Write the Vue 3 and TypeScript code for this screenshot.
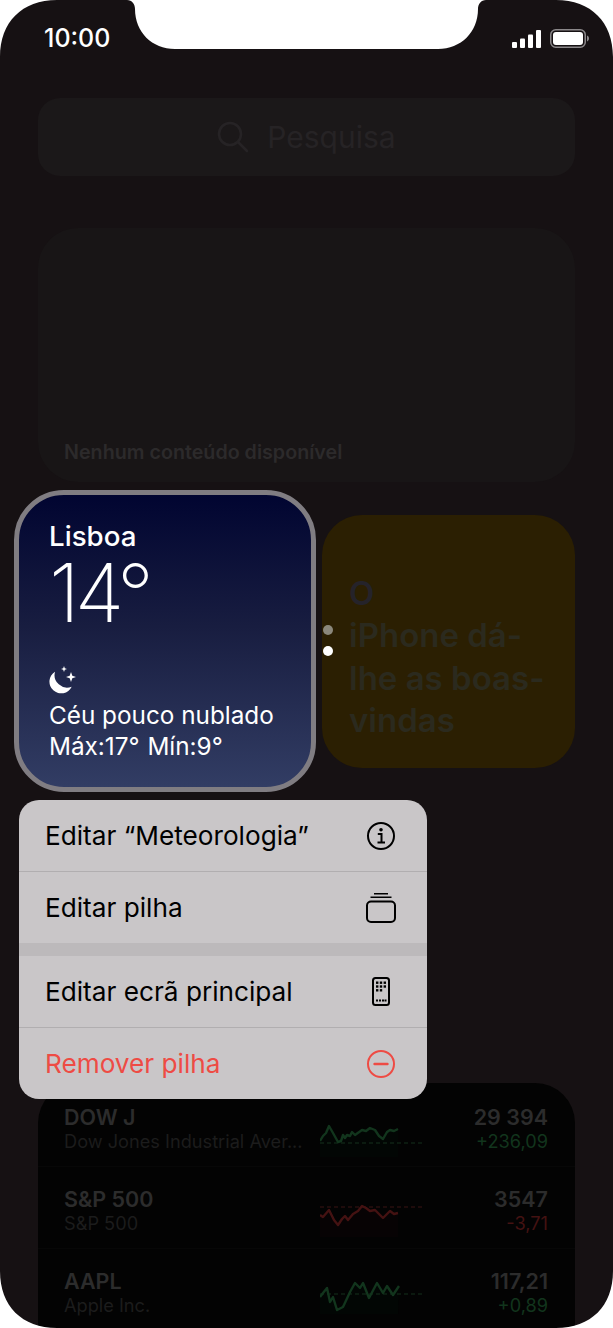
<script setup lang="ts">
interface Stock {
  symbol: string
  name: string
  price: string
  change: string
  up: boolean
  points: string
  baseline: number
  chartTop: number
}

const stocks: Stock[] = [
  {
    symbol: 'DOW J',
    name: 'Dow Jones Industrial Aver...',
    price: '29 394',
    change: '+236,09',
    up: true,
    points: '0,18 3,13 6,10 9,3 13,10 18,19 21,18 23,12 25,15 27,12 30,13 32,9 35,12 42,7 46,8 50,5 55,7 59,13 63,16 67,9 70,7 74,8 78,6',
    baseline: 20,
    chartTop: 18
  },
  {
    symbol: 'S&P 500',
    name: 'S&P 500',
    price: '3547',
    change: '-3,71',
    up: false,
    points: '0,12 3,14 9,7 14,17 18,22 22,16 25,13 28,17 33,11 38,8 42,3 46,5 50,8 55,7 59,11 63,15 70,8 74,11 78,10',
    baseline: 4,
    chartTop: 16
  },
  {
    symbol: 'AAPL',
    name: 'Apple Inc.',
    price: '117,21',
    change: '+0,89',
    up: true,
    points: '0,17 3,13 7,8 10,22 13,17 17,30 23,27 30,12 35,3 40,8 43,3 49,18 57,3 63,13 67,6 73,15 79,6',
    baseline: 14,
    chartTop: 11
  }
]
</script>

<template>
  <div class="phone">
    <header class="status">
      <span class="time">10:00</span>
      <div class="status-icons">
        <svg width="29" height="18" viewBox="0 0 29 18" fill="#fff">
          <rect x="0" y="12" width="5" height="6" rx="1" />
          <rect x="8" y="8.5" width="5" height="9.5" rx="1" />
          <rect x="16" y="4.5" width="5" height="13.5" rx="1" />
          <rect x="24" y="0" width="5" height="18" rx="1" />
        </svg>
        <svg width="39" height="19" viewBox="0 0 39 19">
          <rect x="0.75" y="0.75" width="34.5" height="17.5" rx="5" fill="none" stroke="#8b888a" stroke-width="1.5" />
          <rect x="3" y="3" width="30" height="13" rx="3" fill="#fff" />
          <path d="M37 6.5c1.2.4 2 1.6 2 3s-.8 2.600-2 3z" fill="#8b888a" />
        </svg>
      </div>
    </header>

    <div class="search">
      <svg width="32" height="32" viewBox="0 0 32 32" fill="none" stroke="#262325" stroke-width="2.600" stroke-linecap="round">
        <circle cx="13" cy="13" r="11" />
        <path d="M21 21l9 9" />
      </svg>
      <span>Pesquisa</span>
    </div>

    <section class="news">
      <span>Nenhum conteúdo disponível</span>
    </section>

    <div class="widgets">
      <article class="weather">
        <div class="city">Lisboa</div>
        <div class="temp">14°</div>
        <svg class="moon" width="32" height="30" viewBox="0 0 32 30" fill="#fff">
          <path d="M8 5.700A11.700 11.700 0 1 0 24.700 20.700A12.600 12.600 0 0 1 8 5.700z" />
          <path d="M17 0l.8 2.200 2.200.8-2.200.8-.8 2.200-.8-2.200-2.200-.8 2.200-.8z" />
          <path d="M24 6l1.300 3.700 3.700 1.300-3.700 1.300-1.300 3.700-1.300-3.700-3.700-1.300 3.700-1.300z" />
        </svg>
        <div class="cond">Céu pouco nublado</div>
        <div class="cond range">Máx:17° Mín:9°</div>
      </article>

      <div class="dots">
        <i class="dot dim"></i>
        <i class="dot"></i>
      </div>

      <article class="tips">
        <span class="tips-first">O</span><br />
        iPhone dá-<br />
        lhe as boas-<br />
        vindas
      </article>
    </div>

    <nav class="menu">
      <div class="menu-row">
        <span>Editar “Meteorologia”</span>
        <svg width="30" height="30" viewBox="0 0 30 30" fill="none" stroke="#000" stroke-width="2">
          <circle cx="15" cy="15" r="13" />
          <circle cx="15" cy="8.800" r="1.800" fill="#000" stroke="none" />
          <path d="M11.800 13h3.700v8.500M11.500 21.500h7.500" />
        </svg>
      </div>
      <div class="menu-row line">
        <span>Editar pilha</span>
        <svg width="30" height="30" viewBox="0 0 30 30" fill="none" stroke="#000" stroke-width="2">
          <rect x="1" y="8.500" width="28" height="20.500" rx="4" />
          <path d="M4.500 4.300h21" stroke-width="1.500" />
          <path d="M8 .8h14" stroke-width="1.500" />
        </svg>
      </div>
      <div class="menu-gap"></div>
      <div class="menu-row">
        <span>Editar ecrã principal</span>
        <svg width="30" height="30" viewBox="0 0 30 30" fill="none" stroke="#000" stroke-width="2">
          <rect x="7" y="1" width="16" height="27" rx="2.500" />
          <g fill="#000" stroke="none">
            <rect x="10" y="4.500" width="2.400" height="2.400" />
            <rect x="13.800" y="4.500" width="2.400" height="2.400" />
            <rect x="17.600" y="4.500" width="2.400" height="2.400" />
            <rect x="10" y="8.300" width="2.400" height="2.400" />
            <rect x="13.800" y="8.300" width="2.400" height="2.400" />
            <rect x="17.600" y="8.300" width="2.400" height="2.400" />
            <rect x="10" y="12.100" width="2.400" height="2.400" />
            <rect x="13.800" y="12.100" width="2.400" height="2.400" />
            <rect x="10" y="22.500" width="2" height="2" />
            <rect x="13" y="22.500" width="2" height="2" />
            <rect x="16" y="22.500" width="2" height="2" />
            <rect x="18.500" y="22.500" width="2" height="2" />
          </g>
        </svg>
      </div>
      <div class="menu-row line danger">
        <span>Remover pilha</span>
        <svg width="30" height="30" viewBox="0 0 30 30" fill="none" stroke="#ee4b44" stroke-width="2">
          <circle cx="15" cy="15" r="13" />
          <path d="M8.500 15h13" stroke-linecap="round" stroke-width="2.400" />
        </svg>
      </div>
    </nav>

    <section class="stocks">
      <div v-for="stock in stocks" :key="stock.symbol" class="stock">
        <div class="stock-name">
          <strong>{{ stock.symbol }}</strong>
          <span>{{ stock.name }}</span>
        </div>
        <svg class="chart" :style="{ marginTop: stock.chartTop + 'px' }" width="103" height="34" viewBox="0 0 103 34" fill="none">
          <path
            :d="`M${stock.points.split(' ').join(' L')} L78,34 L0,34 Z`"
            :fill="stock.up ? '#020604' : '#070304'"
          />
          <line
            x1="0"
            x2="103"
            :y1="stock.baseline"
            :y2="stock.baseline"
            :stroke="stock.up ? '#14301c' : '#3a1414'"
            stroke-width="1"
            stroke-dasharray="4 3"
          />
          <polyline
            :points="stock.points"
            :stroke="stock.up ? '#12351d' : '#441212'"
            stroke-width="2.400"
            stroke-linejoin="round"
          />
        </svg>
        <div class="stock-value">
          <strong>{{ stock.price }}</strong>
          <span :class="stock.up ? 'up' : 'down'">{{ stock.change }}</span>
        </div>
      </div>
    </section>

    <svg class="frame" width="613" height="1328" viewBox="0 0 613 1328">
      <path
        fill="#fff"
        fill-rule="evenodd"
        d="M0 0H613V1328H0Z
           M57 0C22 0 0 22 0 57V1271C0 1306 22 1328 57 1328H556C591 1328 613 1306 613 1271V57C613 22 591 0 556 0H486C481 0 478 4 478 9C478 32 461 49 438 49H175C152 49 135 32 135 9C135 4 132 0 127 0Z"
      />
    </svg>
  </div>
</template>

<style scoped>
.phone {
  position: relative;
  width: 613px;
  height: 1328px;
  overflow: hidden;
  background: #161113;
  font-family: Inter, "Liberation Sans", sans-serif;
}

.status {
  height: 98px;
  box-sizing: border-box;
  padding: 23px 24px 0 44px;
  display: flex;
  justify-content: space-between;
  align-items: flex-start;
}
.time {
  color: #fff;
  font-size: 25px;
  line-height: 30px;
  font-weight: 500;
}
.status-icons {
  display: flex;
  align-items: center;
  gap: 9px;
  padding-top: 6px;
}

.search {
  height: 78px;
  margin: 0 38px;
  border-radius: 22px;
  background: #1b1819;
  display: flex;
  align-items: center;
  justify-content: center;
  gap: 18px;
  color: #262325;
  font-size: 30px;
}

.news {
  height: 254px;
  margin: 52px 38px 0;
  box-sizing: border-box;
  padding: 0 26px 18px;
  border-radius: 40px;
  background: #181516;
  display: flex;
  align-items: flex-end;
  color: #2c2a2b;
  font-size: 19.700px;
  line-height: 24px;
  font-weight: 600;
}

.widgets {
  position: relative;
  margin: 8px 38px 0 14px;
  display: flex;
  align-items: center;
  gap: 6px;
}
.weather {
  width: 302px;
  height: 302px;
  box-sizing: border-box;
  flex: none;
  padding: 26px 30px 0;
  border: 5px solid #807d82;
  border-radius: 50px;
  background: linear-gradient(#010531, #181d40 45%, #323d64);
  color: #fff;
}
.city {
  font-size: 27.700px;
  line-height: 30px;
  font-weight: 500;
}
.temp {
  font-size: 81px;
  line-height: 84px;
  font-weight: 200;
  letter-spacing: -5px;
}
.moon {
  display: block;
  margin: 31px 0 0 -2px;
}
.cond {
  margin-top: 4px;
  font-size: 24.300px;
  line-height: 30px;
}
.cond.range {
  margin-top: 1px;
  word-spacing: 1px;
}

.dots {
  position: absolute;
  left: 309px;
  top: 135px;
  display: flex;
  flex-direction: column;
  gap: 11px;
}
.dot {
  display: block;
  width: 10px;
  height: 10px;
  border-radius: 50%;
  background: #fff;
}
.dot.dim {
  background: #8b887c;
}

.tips {
  flex: 1;
  height: 253px;
  box-sizing: border-box;
  padding: 57px 0 0 27px;
  border-radius: 40px;
  background: #2b1f02;
  color: #2b2a1e;
  font-size: 33px;
  line-height: 42.500px;
  font-weight: 600;
}
.tips-first {
  color: #25232a;
}

.menu {
  position: relative;
  z-index: 2;
  width: 408px;
  margin: 8px 0 0 19px;
  overflow: hidden;
  border-radius: 20px;
  background: #c9c6c8;
}
.menu-row {
  height: 71px;
  box-sizing: border-box;
  padding: 0 31px 0 26px;
  display: flex;
  align-items: center;
  justify-content: space-between;
  color: #000;
  font-size: 26.200px;
}
.menu-row.line {
  height: 72px;
  border-top: 1px solid #b1aeb0;
}
.menu-row.danger {
  color: #ee4b44;
}
.menu-gap {
  height: 13px;
  background: #bcb9bb;
}

.stocks {
  height: 300px;
  margin: -16px 38px 0;
  box-sizing: border-box;
  padding: 2px 27px 0 26px;
  border-radius: 40px;
  background: #030303;
}
.stock {
  height: 82px;
  margin: 0 -27px 0 -26px;
  padding: 20px 27px 0 26px;
  display: flex;
  align-items: flex-start;
  border-bottom: 1px solid #070707;
  box-sizing: border-box;
}
.stock-name,
.stock-value {
  display: flex;
  flex-direction: column;
  font-size: 18.200px;
  line-height: 24px;
  white-space: nowrap;
}
.stock-name {
  width: 256px;
  color: #1c1c1c;
}
.stock-name strong,
.stock-value strong {
  color: #2c2c2c;
  font-size: 21.500px;
  font-weight: 600;
}
.chart {
  flex: none;
}
.stock-value {
  flex: 1;
  align-items: flex-end;
}
.up {
  color: #12351d;
}
.down {
  color: #441212;
}

.frame {
  position: absolute;
  inset: 0;
  z-index: 3;
  pointer-events: none;
}
</style>

<style>
html,
body {
  margin: 0;
  background: #fff;
}
</style>
